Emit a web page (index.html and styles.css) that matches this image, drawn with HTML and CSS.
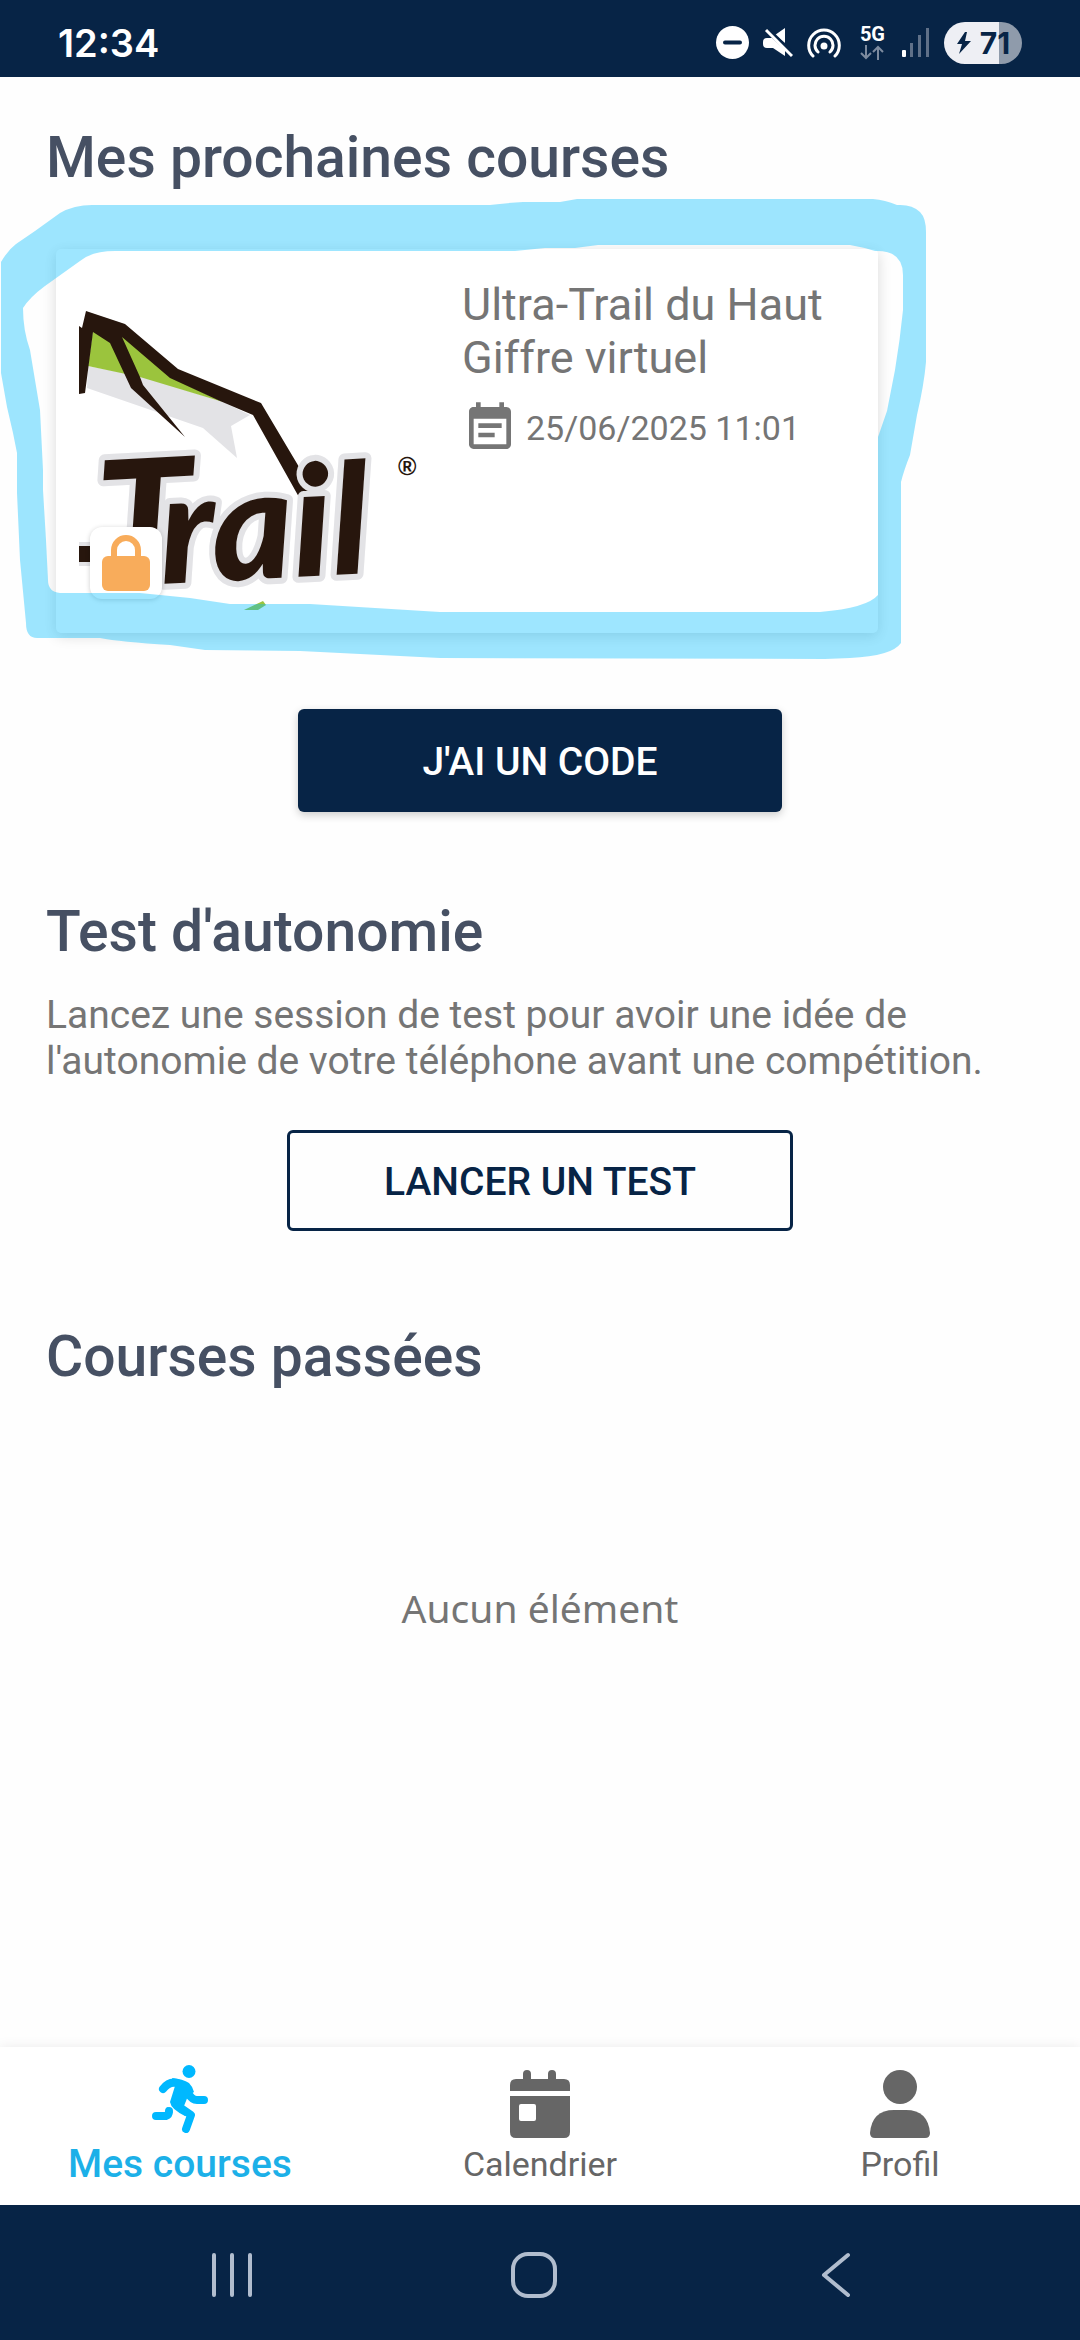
FILE: index.html
```html
<!DOCTYPE html>
<html lang="fr">
<head>
    <meta charset="UTF-8">
    <meta name="viewport" content="width=device-width, initial-scale=1.0">
    <title>Mes courses</title>
    <link rel="stylesheet" href="styles.css">
</head>
<body>
    <header class="status-bar">
        <span class="time">12:34</span>
        <div class="status-icons">
            <svg width="33" height="33" viewBox="0 0 33 33">
                <circle cx="16.500" cy="16.500" r="16.500" fill="#fff"/>
                <path d="M9 16.500h15" stroke="#072446" stroke-width="4" stroke-linecap="round"/>
            </svg>
            <svg width="30" height="30" viewBox="0 0 30 30">
                <path d="M0 14q0-4 4-4h5l13 12v6L10 20H4q-4 0-4-4zM12 7l10-7v15z" fill="#fff"/>
                <path d="M3 2l26 26" stroke="#fff" stroke-width="3"/>
                <path d="M6 1l24 24" stroke="#072446" stroke-width="2"/>
            </svg>
            <svg width="34" height="30" viewBox="0 0 34 30" fill="none" stroke="#fff" stroke-width="3" stroke-linecap="round">
                <path d="M6 28a15.300 15.300 0 1 1 22 0M11 24a9 9 0 1 1 12 0"/>
                <circle cx="17" cy="18" r="2" fill="#fff"/>
            </svg>
            <div class="network">
                <span>5G</span>
                <svg width="24" height="15" viewBox="0 0 24 15" fill="none" stroke="#7d8b9f" stroke-width="2">
                    <path d="M6 0v13M1 8l5 5 5-5M18 15V2M13 7l5-5 5 5"/>
                </svg>
            </div>
            <svg width="28" height="30" viewBox="0 0 28 30">
                <rect x="0" y="22" width="4" height="7" rx="1" fill="#fff"/>
                <path d="M8 15h3v14H8zM16 7h3v22h-3zM24 0h3v29h-3z" fill="#5f7088"/>
            </svg>
            <div class="battery">
                <svg width="16" height="22" viewBox="0 0 16 22"><path d="M9 0L1 12h5l-3 10L15 9H9l2-9z" fill="#072446"/></svg>
                <span>71</span>
            </div>
        </div>
    </header>

    <main>
        <h1>Mes prochaines courses</h1>
        <article class="race-card">
            <div class="race-image">
                <svg class="race-logo" viewBox="79 272 338 338" role="img" aria-label="Trail">
                    <path d="M88 366L140 376 223 402 250 415 231 426 237 458 203 428 87 388z" fill="#e3e3e6"/>
                    <path d="M93 330L122 335 172 378 223 402 140 377 88 366z" fill="#9bc43d"/>
                    <path d="M86 311L125 324 178 369 261 403 324 509 309 515 253 415 220 401 170 378 122 337 140 377 143 385 185 437 131 388 110 343 93 332 85 393 79 394V326L82 328z" fill="#27160d"/>
                    <path d="M79 554h20" stroke="#e3e3e6" stroke-width="24"/>
                    <path d="M79 554h20" stroke="#27160d" stroke-width="16"/>
                    <g class="lettering">
                        <text x="100" y="584" font-size="170" transform="rotate(-3 100 584)">T</text>
                        <text x="162" y="584" font-size="154" transform="rotate(-3 162 584)">rail</text>
                    </g>
                    <text class="registered" x="398" y="475">®</text>
                    <path d="M244 610L263 601 266 605 258 610z" fill="#9bc43d"/>
                </svg>
                <div class="lock-badge">
                    <svg width="48" height="56" viewBox="0 0 48 56">
                        <path d="M12 24V15a12 12 0 0 1 24 0v9" fill="none" stroke="#f8ac5b" stroke-width="6"/>
                        <rect y="21" width="48" height="35" rx="6" fill="#f8ac5b"/>
                    </svg>
                </div>
            </div>
            <div class="race-info">
                <h2>Ultra-Trail du Haut Giffre virtuel</h2>
                <p class="race-date">
                    <svg width="56" height="56" viewBox="0 0 24 24" fill="#757575">
                        <path d="M17 10H7v2h10v-2zm2-7h-1V1h-2v2H8V1H6v2H5c-1.110 0-1.990.900-1.990 2L3 19c0 1.100.890 2 2 2h14c1.100 0 2-.900 2-2V5c0-1.100-.900-2-2-2zm0 16H5V8h14v11zm-5-5H7v2h7v-2z"/>
                    </svg>
                    25/06/2025 11:01
                </p>
            </div>
            <!-- highlighter stroke around the card -->
            <svg class="highlight" width="930" height="462" viewBox="0 198 930 462">
                <path fill-rule="evenodd" d="M1 262Q8 250 16 244L35 231 60 213Q74 205 92 205H490Q505 203 523 202H560L577 199H873Q885 200 897 205 912 204 920 212 926 218 926 232V362Q924 385 917 415L910 455Q904 470 901 482V643Q892 656 850 658L825 659 440 658 300 651 205 650 170 645Q120 642 100 638H37Q26 638 26 623L20 560 17 493V453L13 433 7 407 1 373z
                M23 308Q30 297 45 286L80 261Q92 251 115 251H515L545 248H575L598 245H850Q862 247 875 251 903 250 903 275V310Q900 340 895 370L887 411 878 437V595Q867 608 820 612H440L310 604H230L190 598 140 593H60Q48 592 48 580L46 540 43 490V470L40 410 30 350Q23 330 23 308z"/>
            </svg>
        </article>
        <button class="btn btn-primary" type="button">J'AI UN CODE</button>

        <h1 class="test-title">Test d'autonomie</h1>
        <p class="description">Lancez une session de test pour avoir une idée de l'autonomie de votre téléphone avant une compétition.</p>
        <button class="btn btn-outline" type="button">LANCER UN TEST</button>

        <h1 class="past-title">Courses passées</h1>
        <p class="empty">Aucun élément</p>
    </main>

    <nav class="tabs">
        <a href="#" class="tab active">
            <svg width="56" height="68" viewBox="0 0 56 68" fill="none" stroke="#00b8ff" stroke-width="8" stroke-linecap="round" stroke-linejoin="round">
                <circle cx="37" cy="6.500" r="6.500" fill="#00b8ff" stroke="none"/>
                <path d="M11 24Q17 16 25 18M36 28Q40 35 45 35H52M26 41L39 50 34 64M4 51H14Q17 50 17 46"/>
                <path d="M20 13Q31 14 37 18 41 22 42 27L36 31 32 41 40 47 33 51Q19 44 18 37L23 21z" fill="#00b8ff" stroke="none"/>
                <path d="M15 42l6 5-4 5-4-4z" fill="#00b8ff" stroke="none"/>
            </svg>
            <span>Mes courses</span>
        </a>
        <a href="#" class="tab">
            <svg width="60" height="68" viewBox="0 0 60 68" fill="#666">
                <path d="M0 21v-6q0-6 6-6h7V4a4 4 0 0 1 8 0v5h17V4a4 4 0 0 1 8 0v5h8q6 0 6 6v6z"/>
                <path fill-rule="evenodd" d="M0 26h60v36q0 6-6 6H6q-6 0-6-6zM11 34q-2 0-2 2v13q0 2 2 2h13q2 0 2-2V36q0-2-2-2z"/>
            </svg>
            <span>Calendrier</span>
        </a>
        <a href="#" class="tab">
            <svg width="60" height="68" viewBox="0 0 60 68" fill="#666">
                <circle cx="30" cy="17" r="17"/>
                <path d="M24 40h12q22 0 24 23 0 5-5 5H5q-5 0-5-5 2-23 24-23z"/>
            </svg>
            <span>Profil</span>
        </a>
    </nav>

    <div class="system-nav">
        <button type="button" aria-label="Applications récentes">
            <svg width="42" height="46" viewBox="0 0 42 46"><path d="M3 3v40M21 3v40M39 3v40"/></svg>
        </button>
        <button type="button" aria-label="Accueil">
            <svg width="46" height="46" viewBox="0 0 46 46"><rect x="2" y="2" width="42" height="42" rx="15"/></svg>
        </button>
        <button type="button" aria-label="Retour">
            <svg width="30" height="46" viewBox="0 0 30 46"><path d="M27 3L3 23l24 20"/></svg>
        </button>
    </div>
</body>
</html>
```
FILE: styles.css
```css
* {
    box-sizing: border-box;
}

body {
    display: flex;
    flex-direction: column;
    min-height: 100vh;
    margin: 0;
    background: #fefefe;
    color: #757575;
    font-family: Roboto, sans-serif;
}

h1, h2, p {
    margin: 0;
    font-weight: 400;
}

svg {
    display: block;
    flex-shrink: 0;
}

button {
    font-family: inherit;
    cursor: pointer;
}

.status-bar {
    display: flex;
    align-items: center;
    justify-content: space-between;
    height: 77px;
    padding: 8px 58px 0;
    background: #072446;
    color: #fff;
}

.time {
    font-family: Inter, sans-serif;
    font-size: 38px;
    font-weight: 600;
}

.status-icons {
    display: flex;
    align-items: center;
    gap: 14px;
}

.network {
    display: flex;
    flex-direction: column;
    align-items: center;
    gap: 2px;
    margin: 0 3px 0 5px;
    font-size: 20px;
    font-weight: 700;
    line-height: 18px;
}

.battery {
    display: flex;
    align-items: center;
    justify-content: center;
    gap: 8px;
    width: 78px;
    height: 42px;
    border-radius: 21px;
    background: linear-gradient(to right, #eeeff4 70%, #8f9bab 70%);
    color: #072446;
    font-family: Inter, sans-serif;
    font-size: 30px;
    font-weight: 700;
}

main {
    display: flex;
    flex: 1;
    flex-direction: column;
    padding: 48px 46px 0;
}

h1 {
    color: #465063;
    font-size: 57px;
    font-weight: 500;
    line-height: 66px;
}

.race-card {
    position: relative;
    display: flex;
    gap: 45px;
    width: 822px;
    max-width: 100%;
    margin: 58px 10px 0;
    padding: 23px;
    border-radius: 5px;
    background: #fff;
    box-shadow: 0 3px 14px rgba(0, 0, 0, 0.15);
}

.race-image {
    position: relative;
    flex-shrink: 0;
    width: 338px;
    height: 338px;
}

.race-logo {
    width: 100%;
    height: 100%;
    overflow: visible;
}

.lettering {
    fill: #27160d;
    stroke: #e3e3e6;
    stroke-width: 12px;
    stroke-linejoin: round;
    paint-order: stroke;
    font-family: Lato, sans-serif;
    font-style: italic;
    font-weight: 900;
}

.registered {
    fill: #27160d;
    font-family: "Liberation Sans", sans-serif;
    font-size: 25px;
    font-weight: 700;
}

.lock-badge {
    position: absolute;
    left: 11px;
    bottom: 11px;
    display: flex;
    justify-content: center;
    width: 72px;
    height: 72px;
    padding-top: 8px;
    border-radius: 12px;
    background: #fff;
    box-shadow: 0 1px 5px rgba(0, 0, 0, 0.2);
}

.race-info {
    padding-top: 6px;
}

.race-info h2 {
    font-size: 45px;
    line-height: 53px;
}

.race-date {
    display: flex;
    align-items: center;
    gap: 8px;
    margin-top: 16px;
    font-size: 34px;
}

.highlight {
    position: absolute;
    left: -56px;
    top: -51px;
    fill: rgba(0, 190, 255, 0.38);
    pointer-events: none;
}

.btn {
    align-self: center;
    padding-top: 4px;
    border-radius: 6px;
    font-size: 39px;
    font-weight: 500;
}

.btn-primary {
    width: 484px;
    height: 103px;
    margin-top: 76px;
    border: none;
    background: #072446;
    color: #fff;
    box-shadow: 0 3px 8px rgba(0, 0, 0, 0.2);
}

.btn-outline {
    width: 506px;
    height: 101px;
    margin-top: 46px;
    border: 3px solid #072446;
    background: none;
    color: #072446;
}

.test-title {
    margin-top: 87px;
}

.description {
    margin-top: 27px;
    font-size: 39px;
    line-height: 46px;
}

.past-title {
    margin-top: 93px;
}

.empty {
    margin-top: 191px;
    font-family: "Noto Sans", sans-serif;
    font-size: 39px;
    line-height: 54px;
    text-align: center;
}

.tabs {
    display: grid;
    grid-template-columns: repeat(3, 1fr);
    height: 158px;
    background: #fff;
    box-shadow: 0 0 12px rgba(0, 0, 0, 0.08);
}

.tab {
    display: flex;
    flex-direction: column;
    align-items: center;
    justify-content: flex-end;
    gap: 6px;
    padding-bottom: 21px;
    color: #666;
    font-size: 34px;
    line-height: 40px;
    text-decoration: none;
}

.tab.active {
    gap: 11px;
    color: #1cb0e8;
    font-size: 39px;
    font-weight: 500;
}

.system-nav {
    display: grid;
    grid-template-columns: repeat(3, 1fr);
    height: 135px;
    padding: 4px 93px 0 81px;
    background: #072446;
}

.system-nav button {
    display: flex;
    align-items: center;
    justify-content: center;
    border: none;
    background: none;
}

.system-nav svg {
    fill: none;
    stroke: #b1bdce;
    stroke-width: 4px;
    stroke-linecap: round;
    stroke-linejoin: round;
}
```
